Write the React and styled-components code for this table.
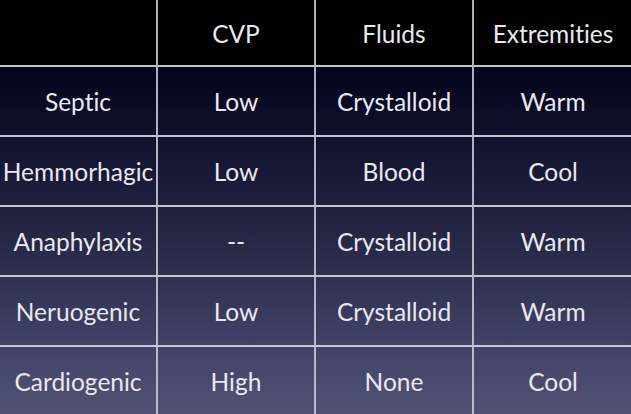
import React from "react";
import styled, { createGlobalStyle } from "styled-components";

const Global = createGlobalStyle`
  html, body { margin: 0; padding: 0; background: #000; overflow: hidden; }
  body { width: 631px; height: 414px; }
`;

const Slide = styled.div`
  width: 631px;
  height: 414px;
  overflow: hidden;
  background: linear-gradient(
    to bottom,
    #000 0px,
    #000 66px,
    #04041a 67px,
    #131430 150px,
    #282a49 250px,
    #44476a 360px,
    #4f5272 414px
  );
`;

const Table = styled.div`
  display: grid;
  width: 634px;
  grid-template-columns: 158px 158px 158px 160px;
  grid-template-rows: 67px repeat(5, 70px);
`;

const Cell = styled.div`
  box-sizing: border-box;
  display: flex;
  align-items: center;
  justify-content: center;
  border-right: 2px solid rgba(205, 205, 220, 0.85);
  border-bottom: 2px solid rgba(215, 215, 228, 0.9);
  color: #e9e8f0;
  font-family: "Lato", "Open Sans", sans-serif;
  font-size: 24.5px;
  font-weight: 400;
  font-variant-ligatures: none;
  white-space: nowrap;
  padding-top: ${(p) => (p.$head ? "1px" : "0")};
`;

const header = ["", "CVP", "Fluids", "Extremities"];
const rows = [
  ["Septic", "Low", "Crystalloid", "Warm"],
  ["Hemmorhagic", "Low", "Blood", "Cool"],
  ["Anaphylaxis", "--", "Crystalloid", "Warm"],
  ["Neruogenic", "Low", "Crystalloid", "Warm"],
  ["Cardiogenic", "High", "None", "Cool"],
];

export default function App() {
  return (
    <>
      <Global />
      <Slide>
        <Table>
          {header.map((h, i) => (
            <Cell key={"h" + i} $head>
              {h}
            </Cell>
          ))}
          {rows.map((r, ri) =>
            r.map((c, ci) => <Cell key={ri + "-" + ci}>{c}</Cell>)
          )}
        </Table>
      </Slide>
    </>
  );
}
